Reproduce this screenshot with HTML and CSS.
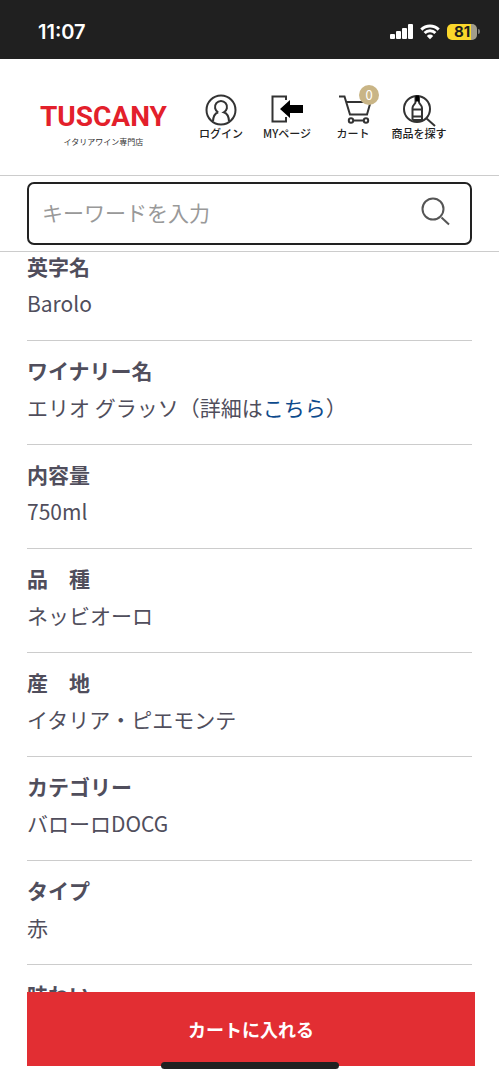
FILE: index.html
```html
<!DOCTYPE html>
<html lang="ja">
<head>
<meta charset="utf-8">
<meta name="viewport" content="width=device-width, initial-scale=1">
<title>TUSCANY イタリアワイン専門店</title>
<link rel="stylesheet" href="styles.css">
</head>
<body>
<div class="status">
  <span class="status-time">11:07</span>
  <div class="status-icons">
    <svg class="signal" viewBox="0 0 24 16" aria-hidden="true">
      <rect x="0" y="10" width="5" height="5" rx="1"/><rect x="6" y="7" width="5" height="8" rx="1"/><rect x="12" y="4" width="5" height="11" rx="1"/><rect x="18" y="0" width="5" height="15" rx="1"/>
    </svg>
    <svg class="wifi" viewBox="0 0 20 16" aria-hidden="true">
      <path d="M1.3 5.6a12.4 12.4 0 0 1 17.4 0M4.6 9a7.7 7.7 0 0 1 10.8 0"/><path class="dot" d="M10 15.2l-3.2-3.3a4.6 4.6 0 0 1 6.4 0z"/>
    </svg>
    <span class="battery">81</span><span class="battery-tip"></span>
  </div>
</div>
<header class="header">
  <a class="brand" href="#">
    <span class="brand-name">TUSCANY</span>
    <span class="brand-sub">イタリアワイン専門店</span>
  </a>
  <nav class="nav">
    <a class="nav-item" href="#">
      <svg class="nav-icon" viewBox="0 0 66 36" aria-hidden="true">
        <circle cx="33" cy="19" r="14.5"/>
        <path d="M30.2 21.3a6 6 0 1 1 5.6 0c3.500 1.200 5 4 5.200 9M30.2 21.300c-3.500 1.200-5 4-5.200 9"/>
      </svg>
      <span>ログイン</span>
    </a>
    <a class="nav-item" href="#">
      <svg class="nav-icon" viewBox="0 0 66 36" aria-hidden="true">
        <path d="M32 9V5.500H18.500V30.500H32V26"/>
        <path class="solid" d="M26 18l10-9v5h13v8H36v5z"/>
      </svg>
      <span>MYページ</span>
    </a>
    <a class="nav-item" href="#">
      <svg class="nav-icon" viewBox="0 0 66 36" aria-hidden="true">
        <path d="M19 5.500h5.500L30 23.500h17L50 13M26.500 11H46"/>
        <path d="M33 29.500h11"/>
        <circle cx="31" cy="29.500" r="2.200"/><circle cx="46" cy="29.500" r="2.200"/>
      </svg>
      <span>カート</span>
      <span class="badge">0</span>
    </a>
    <a class="nav-item" href="#">
      <svg class="nav-icon" viewBox="0 0 66 36" aria-hidden="true">
        <circle cx="31" cy="18" r="13"/>
        <path d="M40 27l9 8"/>
        <path d="M29.500 5v6c0 2-3 3-3 6v12M33 5v6c0 2 3 3 3 6v12M26.500 18.500H36M26.500 25.500H36M26.500 29H36"/>
        <path class="solid" d="M29.500 4.500h3.500v6h-3.500z"/>
      </svg>
      <span>商品を探す</span>
    </a>
  </nav>
</header>
<form class="search" role="search">
  <div class="search-box">
    <input class="search-input" type="text" aria-label="キーワード" placeholder="キーワードを入力">
    <button class="search-button" type="button" aria-label="検索">
      <svg viewBox="0 0 30 30" aria-hidden="true"><circle cx="12" cy="12" r="10.500"/><path d="M20.500 20.500l7.500 7"/></svg>
    </button>
  </div>
</form>
<main class="details">
  <dl class="spec">
    <div class="row"><dt>英字名</dt><dd>Barolo</dd></div>
    <div class="row"><dt>ワイナリー名</dt><dd>エリオ グラッソ（詳細は<a href="#">こちら</a>）</dd></div>
    <div class="row"><dt>内容量</dt><dd>750ml</dd></div>
    <div class="row"><dt>品　種</dt><dd>ネッビオーロ</dd></div>
    <div class="row"><dt>産　地</dt><dd>イタリア・ピエモンテ</dd></div>
    <div class="row"><dt>カテゴリー</dt><dd>バローロDOCG</dd></div>
    <div class="row"><dt>タイプ</dt><dd>赤</dd></div>
    <div class="row"><dt>味わい</dt></div>
  </dl>
</main>
<footer class="buy">
  <button class="buy-button" type="button">カートに入れる</button>
  <span class="home-bar"></span>
</footer>
</body>
</html>
```
FILE: styles.css
```css
* { box-sizing: border-box; }
body {
  margin: 0;
  height: 100vh;
  display: flex;
  flex-direction: column;
  overflow: hidden;
  background: #fff;
  color: #504e5c;
  font-family: "Noto Sans CJK JP", sans-serif;
  font-size: 21px;
}
a { text-decoration: none; }
svg { display: block; fill: none; }

.status {
  flex: none;
  display: flex;
  align-items: center;
  justify-content: space-between;
  height: 59px;
  padding: 4px 19px 0 38px;
  background: #202020;
  color: #fff;
  font-family: Inter, sans-serif;
}
.status-time { font-size: 20px; font-weight: 600; }
.status-icons { display: flex; align-items: center; }
.signal { width: 24px; height: 16px; margin-right: 6px; fill: #fff; }
.wifi { width: 20px; height: 16px; margin-right: 7px; stroke: #fff; stroke-width: 3; }
.wifi .dot { fill: #fff; stroke: none; }
.battery {
  width: 30px;
  border-radius: 5px;
  background: linear-gradient(90deg, #fbd72b 80%, #a29d8c 80%);
  color: #1d1d1d;
  font-size: 15px;
  font-weight: 700;
  line-height: 16px;
  text-align: center;
}
.battery-tip { width: 2px; height: 5px; margin-left: 1px; border-radius: 0 2px 2px 0; background: #777; }

.header {
  flex: none;
  display: flex;
  align-items: flex-start;
  justify-content: space-between;
  height: 116px;
  padding: 32px 47px 0 40px;
}
.brand { display: flex; flex-direction: column; align-items: center; padding-top: 9px; }
.brand-name {
  color: #e3202b;
  font-family: Roboto, sans-serif;
  font-size: 28px;
  font-weight: 700;
  line-height: 34px;
}
.brand-sub { color: #333; font-size: 8px; line-height: 16px; }
.nav { display: grid; grid-template-columns: repeat(4, 66px); }
.nav-item {
  position: relative;
  display: flex;
  flex-direction: column;
  align-items: center;
  color: #222;
  font-size: 11px;
  font-weight: 500;
  line-height: 12px;
  white-space: nowrap;
}
.nav-icon { width: 66px; height: 36px; stroke: #333; stroke-width: 2; }
.nav-icon .solid { fill: #000; stroke: none; }
.badge {
  position: absolute;
  top: -6px;
  right: 7px;
  width: 20px;
  height: 20px;
  border-radius: 50%;
  background: #c9b586;
  color: #fff;
  font-size: 13px;
  font-weight: 400;
  line-height: 20px;
  text-align: center;
}

.search { flex: none; padding: 6px 27px; border-top: 1px solid #ccc; border-bottom: 1px solid #ccc; }
.search-box {
  display: flex;
  align-items: center;
  height: 63px;
  padding-bottom: 4px;
  border: 2px solid #222;
  border-radius: 7px;
}
.search-input {
  flex: 1;
  min-width: 0;
  height: 100%;
  padding: 0 0 0 13px;
  border: 0;
  outline: 0;
  background: none;
  color: inherit;
  font: inherit;
}
.search-input::placeholder { color: #999; opacity: 1; }
.search-button { margin-right: 19px; padding: 0; border: 0; background: none; }
.search-button svg { width: 30px; height: 30px; stroke: #555; stroke-width: 2; }

.details { flex: 1; min-height: 0; overflow: hidden; padding: 0 27px; }
.spec { margin: 0; }
.row { padding: 15px 0 20px; border-bottom: 1px solid #ccc; }
.row:first-child { padding-top: 0; }
dt { margin-bottom: 6px; font-weight: 700; line-height: 28px; }
dd { margin: 0; line-height: 34px; }
dd a { color: #0d4a8c; }

.buy { flex: none; position: relative; padding: 0 24px 14px 27px; }
.buy-button {
  display: block;
  width: 100%;
  height: 74px;
  border: 0;
  background: #e22e33;
  color: #fff;
  font: inherit;
  font-size: 18px;
  font-weight: 700;
}
.home-bar {
  position: absolute;
  bottom: 11px;
  left: 50%;
  width: 178px;
  height: 7px;
  margin-left: -89px;
  border-radius: 4px;
  background: #202020;
}
```
